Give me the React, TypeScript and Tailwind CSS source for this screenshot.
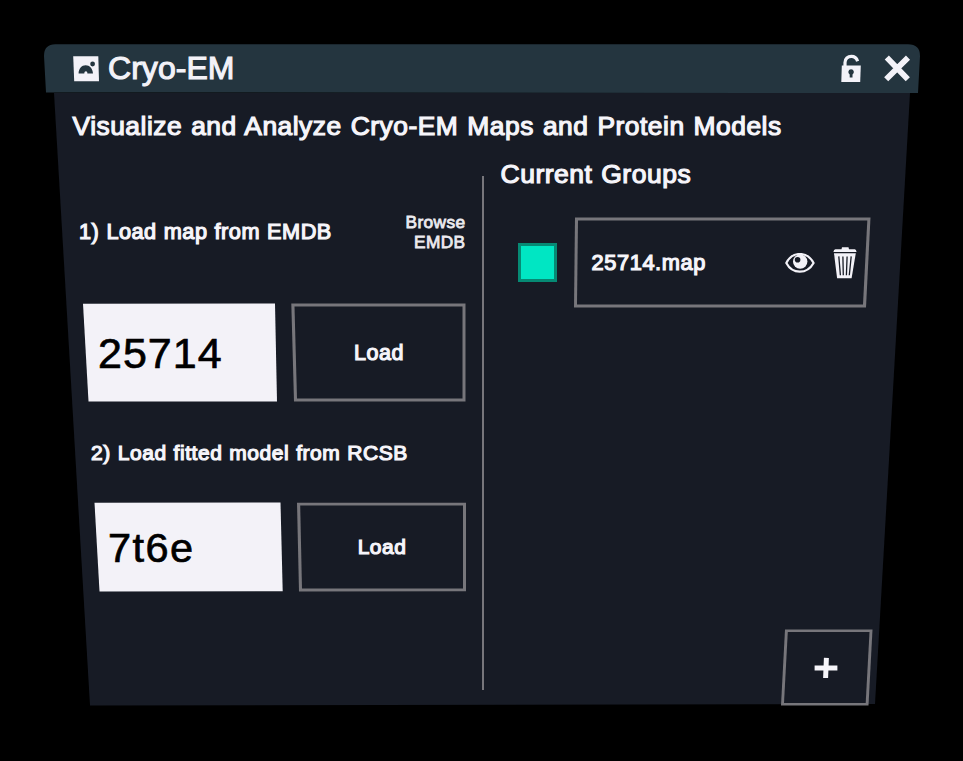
import React from "react";

const border = "bg-[#77767b]";
const fill = "bg-[#171b25]";

function Heading({ className = "", children }: { className?: string; children: React.ReactNode }) {
  return (
    <div className={`whitespace-nowrap text-[#f6f5fa] [-webkit-text-stroke:1.2px_currentColor] ${className}`}>
      {children}
    </div>
  );
}

function Frame({
  outer,
  inner,
  children,
}: {
  outer: string;
  inner: string;
  children: React.ReactNode;
}) {
  return (
    <div className={`${border} ${outer} shrink-0`}>
      <div className={`${fill} ${inner} flex h-full w-full items-center`}>{children}</div>
    </div>
  );
}

function ImageIcon() {
  return (
    <svg width="27" height="26" viewBox="0 0 27 26" className="shrink-0">
      <path d="M0.2 0.3 L25.3 0.3 L26 25.3 L1.2 25.3 Z" fill="#f3f2f8" />
      <path
        d="M5.6 17.6 C5.6 12.6 8.8 9.2 12.6 9.2 C16.6 9.2 19.8 12.6 20 17.6 H14.4 C14.4 16 13.8 15.2 12.9 15.2 C12 15.2 11.4 16 11.3 17.6 Z"
        fill="#24353f"
      />
      <circle cx="19.6" cy="8" r="2.4" fill="#24353f" />
    </svg>
  );
}

function LockIcon() {
  return (
    <svg width="21" height="29" viewBox="0 0 21 29" className="shrink-0">
      <path d="M4 13 V8.5 C4 4.6 6.8 2.4 10.4 2.4 C13.4 2.4 15.6 4 16.6 7.2" fill="none" stroke="#f3f2f8" strokeWidth="3.2" />
      <path d="M0.8 11.6 H19.8 L19.2 28 H0.3 Z" fill="#f3f2f8" />
      <path d="M10.1 15.2 a2.8 2.8 0 0 1 1.4 5.2 V23.4 H8.7 V20.4 a2.8 2.8 0 0 1 1.4 -5.2 Z" fill="#24353f" />
    </svg>
  );
}

function CloseIcon() {
  return (
    <svg width="27" height="27" viewBox="0 0 27 27" className="shrink-0">
      <path d="M2.8 2.6 L23.8 24.2 M24 2.6 L2.2 24.2" stroke="#f3f2f8" strokeWidth="5.8" />
    </svg>
  );
}

function EyeIcon() {
  return (
    <svg width="30" height="20" viewBox="0 0 30 20" className="shrink-0">
      <path d="M1.3 10 C7.5 -2 22 -2 28.6 10 C22 21.6 7.5 21.6 1.3 10 Z" fill="none" stroke="#f3f2f8" strokeWidth="2.2" strokeLinejoin="round" />
      <circle cx="15.2" cy="8.6" r="7.2" fill="#f3f2f8" />
      <circle cx="12.6" cy="6.8" r="2.8" fill="#171b25" />
    </svg>
  );
}

function TrashIcon() {
  return (
    <svg width="24" height="32" viewBox="0 0 24 32" className="shrink-0">
      <path d="M9 0.3 H15.5 L16 2.2 H21.8 Q23.2 2.2 23.6 5 H0.4 Q0.8 2.2 2.4 2.2 H8.5 Z" fill="#f3f2f8" />
      <path d="M1 6.2 H22.8 L18.6 31.3 H4.1 Z" fill="#f3f2f8" />
      <path d="M5.8 9.4 L7.4 28.2 M9.9 9.4 L10.3 28.2 M14.1 9.4 L13.4 28.2 M18.2 9.4 L16.3 28.2" stroke="#171b25" strokeWidth="1.3" />
    </svg>
  );
}

export default function App() {
  return (
    <main className="flex h-[761px] w-[963px] flex-col overflow-hidden bg-black pt-[44px] font-['Liberation_Sans',Arial,sans-serif]">
      <header className="ml-[44px] flex h-[49px] w-[876px] shrink-0 items-center bg-[#24353f] pl-[29px] [clip-path:path('M0_12Q0_0_12_0.3L864_0.3Q876_0.3_876_12L874_49L2_48.5Z')]">
        <ImageIcon />
        <h1 className="ml-[8px] whitespace-nowrap text-[32px] leading-[49px] tracking-[0.05px] text-[#f3f2f8] [-webkit-text-stroke:1.1px_currentColor]">
          Cryo-EM
        </h1>
        <div className="ml-auto flex items-center gap-[22px] pr-[9px]">
          <LockIcon />
          <CloseIcon />
        </div>
      </header>

      <section className="relative ml-[54px] h-[613px] w-[856px] shrink-0">
        <div className="absolute inset-0 bg-[#171b25] [clip-path:polygon(0_0,856px_0,821px_611px,36px_612.5px)]" />
        <div className="relative flex h-full flex-col">
          <Heading className="h-[66px] pl-[18.5px] text-[26.4px] leading-[66px] tracking-[0.5px] [word-spacing:1.2px]">
            Visualize and Analyze Cryo-EM Maps and Protein Models
          </Heading>

          <div className="flex flex-1">
            <div className="flex w-[428px] shrink-0 flex-col">
              <div className="mt-[53px] flex h-[40px] items-center justify-between pl-[25px] pr-[16.5px]">
                <Heading className="text-[21.7px] leading-[40px] tracking-[0.5px] [word-spacing:0.6px] [-webkit-text-stroke-width:1px]">
                  1) Load map from EMDB
                </Heading>
                <div className="text-right text-[17.3px] leading-[20px] tracking-[0.4px] text-[#ebeaef] [-webkit-text-stroke:0.8px_currentColor]">
                  Browse
                  <br />
                  EMDB
                </div>
              </div>

              <div className="mt-[51px] flex h-[99px] pl-[29px]">
                <div className="flex h-[99px] w-[194px] shrink-0 items-center bg-[#f3f2f8] pl-[15px] pt-[1px] text-[43px] tracking-[1px] text-black [-webkit-text-stroke:0.7px_black] [clip-path:polygon(0_0.7px,192px_0.5px,194px_98.5px,5.5px_98.5px)]">
                  25714
                </div>
                <div className="ml-[14px]">
                  <Frame
                    outer="h-[99px] w-[175px] [clip-path:polygon(0.3px_0.5px,174.5px_0.5px,174.5px_98.5px,3px_98.5px)]"
                    inner="justify-center pl-[1px] [clip-path:polygon(3.5px_3.5px,171.5px_3.5px,171.5px_95.5px,6px_95.5px)]"
                  >
                    <Heading className="pt-[2px] text-[21.5px] tracking-[0.5px] [-webkit-text-stroke-width:1px]">Load</Heading>
                  </Frame>
                </div>
              </div>

              <Heading className="mt-[31px] h-[40px] pl-[37px] text-[21px] leading-[40px] tracking-[0.54px] [word-spacing:0.6px] [-webkit-text-stroke-width:1px]">
                2) Load fitted model from RCSB
              </Heading>

              <div className="mt-[29px] flex h-[90px] pl-[40px]">
                <div className="flex h-[90px] w-[189px] shrink-0 items-center bg-[#f3f2f8] pl-[14px] pt-[3px] text-[41.5px] tracking-[1.4px] text-black [-webkit-text-stroke:0.7px_black] [clip-path:polygon(0.5px_0.7px,186.5px_0.5px,188.7px_89.3px,5.5px_89.5px)]">
                  7t6e
                </div>
                <div className="ml-[14px]">
                  <Frame
                    outer="h-[90px] w-[169px] [clip-path:polygon(0_0.7px,169px_0.7px,169px_89.3px,2px_89.5px)]"
                    inner="justify-center pl-[1px] [clip-path:polygon(3.2px_3.5px,166px_3.5px,166px_86.5px,5px_86.5px)]"
                  >
                    <Heading className="text-[21px] tracking-[0.5px] [-webkit-text-stroke-width:1px]">Load</Heading>
                  </Frame>
                </div>
              </div>
            </div>

            <div className="mt-[17px] h-[514px] w-[2px] shrink-0 bg-[#77767b]" />

            <div className="flex w-[426px] shrink-0 flex-col">
              <Heading className="h-[30px] pl-[16.5px] text-[26.5px] leading-[30px] tracking-[0.5px] [word-spacing:1px]">
                Current Groups
              </Heading>

              <div className="mt-[28px] flex h-[91px] items-center pl-[34px]">
                <div className="h-[39px] w-[39px] shrink-0 border-[3px] border-[#068a74] bg-[#00e6c3]" />
                <div className="ml-[17px]">
                  <Frame
                    outer="h-[91px] w-[297px] [clip-path:polygon(1px_0.5px,296.5px_0.5px,292px_90.5px,0_90.5px)]"
                    inner="pl-[17.5px] [clip-path:polygon(4px_3.5px,293.3px_3.5px,289px_87.5px,3px_87.5px)]"
                  >
                    <Heading className="w-[193.5px] pt-[1px] text-[21.8px] tracking-[0.6px] [-webkit-text-stroke-width:1px]">
                      25714.map
                    </Heading>
                    <EyeIcon />
                    <div className="ml-[18px]">
                      <TrashIcon />
                    </div>
                  </Frame>
                </div>
              </div>

              <div className="mt-[321px] pl-[297px]">
                <Frame
                  outer="h-[77px] w-[92px] [clip-path:polygon(4px_0.5px,91.5px_0.5px,87.5px_76.5px,0_76.5px)]"
                  inner="justify-center [clip-path:polygon(6.8px_3px,88.5px_3px,84.7px_74px,3px_74px)]"
                >
                  <svg width="24" height="22" viewBox="0 0 24 22" className="mr-[2px]">
                    <path d="M0.6 11 H23.4 M12.4 0.8 L11.6 21" stroke="#f6f5fa" strokeWidth="5" />
                  </svg>
                </Frame>
              </div>
            </div>
          </div>
        </div>
      </section>
    </main>
  );
}
